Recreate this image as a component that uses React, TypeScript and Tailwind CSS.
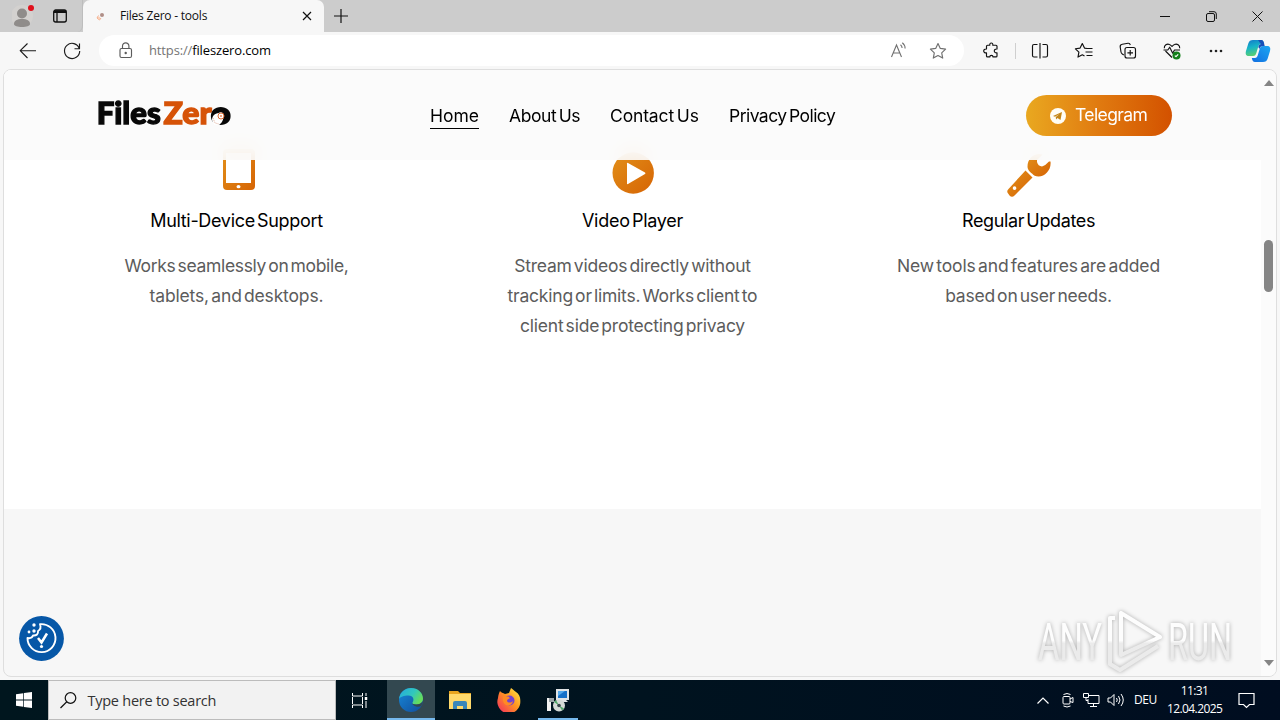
import type { ReactNode } from 'react'

interface IconProps {
  children: ReactNode
  className?: string
}

function LineIcon({ children, className = 'text-[#1b1b1b]' }: IconProps) {
  return (
    <svg width="20" height="20" viewBox="0 0 20 20" fill="none" stroke="currentColor" strokeWidth="1.15" strokeLinejoin="round" className={`shrink-0 ${className}`}>
      {children}
    </svg>
  )
}

function TabBar() {
  return (
    <div className="flex h-8 bg-[#cccccc]">
      <div className="flex w-[83px] items-center rounded-br-[6px] border-r border-[#bdbdbd] pl-3">
        <svg width="24" height="24" viewBox="0 0 24 24" className="shrink-0">
          <circle cx="10" cy="12" r="11" fill="#d3d1cf" />
          <circle cx="10" cy="9.5" r="5" fill="#8f8c8a" />
          <path d="M2 20c0-3.400 3-5 8-5s8 1.600 8 5c0 2-3.500 3-8 3s-8-1-8-3z" fill="#8f8c8a" />
          <circle cx="19" cy="4" r="3" fill="#e0101c" />
        </svg>
        <svg width="16" height="16" viewBox="0 0 16 16" className="ml-4 shrink-0" fill="none" stroke="#111" strokeWidth="1.300">
          <rect x="1.700" y="2" width="12.600" height="12" rx="2" />
          <path d="M1.700 4.300h12.600M5 4.300V14" />
          <path d="M2 3.200h12" strokeWidth="2" />
        </svg>
      </div>
      <div className="flex w-[241px] items-center rounded-t-[7px] bg-[#f7f7f7] pl-3">
        <svg width="12" height="12" viewBox="0 0 12 12" className="shrink-0">
          <circle cx="7" cy="5" r="2" fill="#b08f88" />
          <path d="M3.500 5.500 2 8l2.500 2 1.500-2" fill="none" stroke="#f4ac8a" />
          <circle cx="4" cy="8" r="1.200" fill="#fbd0b8" />
        </svg>
        <span className="ml-[13px] w-[182px] text-[12px] tracking-[-0.22px] text-[#111]">Files Zero - tools</span>
        <svg width="10" height="10" viewBox="0 0 10 10" stroke="#111" strokeWidth="1.200">
          <path d="M1 1l8 8M9 1 1 9" />
        </svg>
      </div>
      <div className="flex w-[33px] items-center justify-center">
        <svg width="14" height="14" viewBox="0 0 14 14" stroke="#111" strokeWidth="1.200">
          <path d="M0 7h14M7 0v14" />
        </svg>
      </div>
      <div className="ml-auto flex items-center">
        <svg width="11" height="11" viewBox="0 0 11 11" stroke="#111" className="mr-[35px]">
          <path d="M0 5.500h10" />
        </svg>
        <svg width="11" height="11" viewBox="0 0 11 11" fill="none" stroke="#111" className="mr-[35px]">
          <rect x=".5" y="2.500" width="8" height="8" rx="1.500" />
          <path d="M3 .7h5a2.300 2.300 0 0 1 2.300 2.300v5" />
        </svg>
        <svg width="11" height="11" viewBox="0 0 11 11" stroke="#111" className="mr-[17px]">
          <path d="M.5.5l10 10M10.500.5l-10 10" />
        </svg>
      </div>
    </div>
  )
}

function Toolbar() {
  return (
    <div className="flex h-[37px] items-center bg-[#f7f7f7]">
      <LineIcon className="ml-[18px] text-[#1b1b1b]">
        <path d="M18 9.700H2.500M9.500 2.500l-7.300 7.200 7.300 7.300" />
      </LineIcon>
      <LineIcon className="ml-6 text-[#1b1b1b]">
        <path d="M17.300 7.500A7.600 7.600 0 1 0 17.700 10M17.500 2.500v5.200h-5" />
      </LineIcon>
      <div className="ml-[17px] flex h-[31px] w-[865px] items-center rounded-full bg-white pl-[17px]">
        <LineIcon className="text-[#5c5c5c]">
          <rect x="4" y="7.500" width="11.500" height="9" rx="1.500" />
          <path d="M6.500 7.500V5a3.200 3.200 0 0 1 6.400 0v2.500" />
          <circle cx="9.700" cy="12" r=".6" fill="currentColor" />
        </LineIcon>
        <span className="ml-[13px] mt-px text-[13px] tracking-[-0.14px] text-[#757575]">
          https://<span className="text-black">fileszero.com</span>
        </span>
        <div className="ml-auto mr-4 flex gap-5">
          <svg width="20" height="20" viewBox="0 0 20 20" fill="none" stroke="#707070" strokeWidth="1.100">
            <path d="M3.500 16 8.500 4l5 12M5.200 12h6.500M12.500 3.800c1 .8 1.600 2 1.600 3.300M14.300 1.800c1.700 1.300 2.800 3.200 2.800 5.700" />
          </svg>
          <LineIcon className="text-[#707070]">
            <path d="m10 2.500 2.300 4.900 5.300.7-3.900 3.700 1 5.300-4.700-2.600-4.700 2.600 1-5.300L2.400 8.100l5.300-.7z" />
          </LineIcon>
        </div>
      </div>
      <LineIcon className="ml-[17px] text-[#111]">
        <path d="M6.500 4.200h2.300C8.600 2.600 9.300 2 10.300 2s1.700.6 1.500 2.200H15a1 1 0 0 1 1 1V8c-1.800-.2-2.700.7-2.700 1.900s.9 2.200 2.700 2v3a1 1 0 0 1-1 1h-3c0-1-.6-1.500-1.600-1.500s-1.600.5-1.600 1.500H6.500a1 1 0 0 1-1-1v-3c-1.800.2-2.800-.8-2.800-2s1-2.100 2.800-1.900V5.200a1 1 0 0 1 1-1z" />
      </LineIcon>
      <div className="ml-[14px] h-4 w-px bg-[#cfcfcf]" />
      <LineIcon className="ml-[14px] text-[#111]">
        <path d="M7.500 3.500H4a1.500 1.500 0 0 0-1.500 1.500v9.500A1.500 1.500 0 0 0 4 16h3.500M12.500 3.500H16A1.500 1.500 0 0 1 17.500 5v9.500A1.500 1.500 0 0 1 16 16h-3.500M10 2v15.500" />
      </LineIcon>
      <LineIcon className="ml-6 text-[#111]">
        <path d="M12 7.400 10 7.100 7.800 2.600 5.600 7.100l-4.700.7 3.500 3.300-.9 5 4.300-2.300 2.200 1.200M12 7.500h6M11 11h7M12 14.500h6" transform="translate(.5)" />
      </LineIcon>
      <LineIcon className="ml-6 text-[#111]">
        <rect x="7" y="6.500" width="10.500" height="10.500" rx="2" />
        <path d="M5.800 14 4.300 13A3 3 0 0 1 3 11L2.200 6A2.500 2.500 0 0 1 4.300 3.200L10 2.300c1.200-.2 2 .5 2.300 1.700M12.200 9v5.600M9.400 11.800H15" />
      </LineIcon>
      <LineIcon className="ml-6 text-[#111]">
        <path d="M10 16.500 3.500 10M2.300 7.200C2 4.200 5 2.300 7.500 3.500c1.200.5 2 1.300 2.500 2 .5-.7 1.300-1.500 2.500-2 2.500-1.200 5.500.7 5.200 3.700M1.500 9h4.300l1.900-2.800 3 6 1.800-3.200h5.500" />
        <circle cx="14.500" cy="14.500" r="4" fill="#13801a" stroke="none" />
        <path d="m12.800 14.600 1.200 1.100 2.200-2.400" stroke="white" />
      </LineIcon>
      <svg width="14" height="4" viewBox="0 0 14 4" className="ml-[27px] shrink-0 fill-[#222]">
        <circle cx="2" cy="2" r="1.300" />
        <circle cx="7" cy="2" r="1.300" />
        <circle cx="12" cy="2" r="1.300" />
      </svg>
      <svg width="26" height="24" viewBox="0 0 26 24" className="ml-[22px] shrink-0">
        <defs>
          <linearGradient id="copilotA" x1="0" y1="0" x2=".3" y2="1">
            <stop offset="0" stopColor="#1277c9" />
            <stop offset=".5" stopColor="#16b4c8" />
            <stop offset="1" stopColor="#58cf73" />
          </linearGradient>
          <linearGradient id="copilotB" x1="0" y1="1" x2="1" y2="0">
            <stop offset="0" stopColor="#126ee0" />
            <stop offset="1" stopColor="#1ca7f2" />
          </linearGradient>
        </defs>
        <path d="M8 1h8c2 0 2.600 1.400 3.200 4h-3c-2 0-2.600 1.500-3.200 3.500l-1.500 5C10.800 16 10 17 8 17H4c-3 0-3.800-2-3-5l2.300-7.500C4 2 5.500 1 8 1z" fill="url(#copilotA)" />
        <path d="M18 23h-8c-2 0-2.600-1.400-3.200-4h3c2 0 2.600-1.500 3.200-3.500l1.500-5C15.200 8 16 7 18 7h4c3 0 3.800 2 3 5l-2.300 7.500c-.7 2.500-2.200 3.500-4.700 3.500z" fill="url(#copilotB)" />
        <path d="M13 1h3c2 0 2.600 1.400 3.200 4l.5 2H18c-2 0-3 1-3.600 3L13.300 8c.5-2 1.300-3 2.900-3-1.200-1-1.800-2-3.200-4z" fill="#174fb8" />
      </svg>
    </div>
  )
}

const navItems = [
  { label: 'Home', style: 'w-[49px] border-b border-black tracking-[0px]' },
  { label: 'About Us', style: 'w-[71px] tracking-[-0.42px]' },
  { label: 'Contact Us', style: 'w-[89px] tracking-[-0.14px]' },
  { label: 'Privacy Policy', style: 'w-[106px] tracking-[-0.54px]' },
]

function SiteHeader() {
  return (
    <header className="absolute inset-x-0 top-0 flex h-[90px] bg-[#fafafa]/88 backdrop-blur-[10px]">
      <svg width="142" height="44" viewBox="-3 -6 142 44" className="ml-[90px] mt-[21px] shrink-0" fontFamily="Lato, sans-serif" fontWeight="900" fontSize="29.500">
        <text x="-.3" y="27" textLength="64" lengthAdjust="spacingAndGlyphs" fill="#080808" stroke="#080808" strokeWidth="1.300">Files</text>
        <text x="66.500" y="27" textLength="48" lengthAdjust="spacingAndGlyphs" fill="#d65308" stroke="#d65308" strokeWidth="1.300">Zer</text>
        <text x="114" y="27" textLength="19.500" lengthAdjust="spacingAndGlyphs" fill="#080808" stroke="#080808" strokeWidth="2">o</text>
        <path d="M115 23c0-5 5-8 9-6 4 3 2 8-2 11h-5z" fill="#fff" />
        <circle cx="124" cy="19" r="3" fill="#fff" stroke="#dc6d35" />
        <circle cx="124" cy="19" r="1" fill="#e4895c" />
        <path d="m116 21 2 5 4 1" fill="none" stroke="#dfb29f" strokeDasharray="1 1" />
      </svg>
      <nav className="ml-[194px] mt-[34px] flex h-[25px] gap-[30px] text-[17.500px] leading-6 [word-spacing:-2px]">
        {navItems.map((item) => (
          <a key={item.label} className={`h-[25px] whitespace-nowrap text-black ${item.style}`}>{item.label}</a>
        ))}
      </nav>
      <button className="ml-[191px] mt-[25px] flex h-[41px] w-[146px] items-center rounded-full bg-linear-to-r from-[#e9a820] via-[#e07a10] to-[#d35100] pl-6 text-[17.500px] tracking-[-0.6px] text-white">
        <svg width="16" height="16" viewBox="0 0 16 16" className="mr-[9px]">
          <circle cx="8" cy="8" r="8" fill="#fffdf5" />
          <path d="m3 8 9-4-1.500 8-3-2-1.500 1.400-.2-2.400L9.500 6 5 8.700z" fill="#c48618" />
        </svg>
        Telegram
      </button>
    </header>
  )
}

function Gradient({ id }: { id: string }) {
  return (
    <defs>
      <linearGradient id={id} x1="0" y1="0" x2="1" y2="1">
        <stop offset="0" stopColor="#e2901a" />
        <stop offset="1" stopColor="#d66404" />
      </linearGradient>
    </defs>
  )
}

function Features() {
  return (
    <section className="flex h-[439px] bg-white px-[34.500px] pt-[79px] text-center">
      <div className="flex w-[396px] flex-col items-center">
        <svg width="32" height="42" viewBox="0 0 32 42" className="ml-[4px]">
          <Gradient id="tablet" />
          <path fillRule="evenodd" d="M4 0h24a4 4 0 0 1 4 4v33a4 4 0 0 1-4 4H4a4 4 0 0 1-4-4V4a4 4 0 0 1 4-4zM3 4v30h25V4z" fill="url(#tablet)" />
          <ellipse cx="15.500" cy="37.700" rx="2" ry="1.600" fill="#fff" />
        </svg>
        <h3 className="mt-[15px] text-[18px] font-[430] leading-[30px] tracking-[-0.32px] text-black [word-spacing:-2.500px]">Multi-Device Support</h3>
        <p className="mt-[15px] text-[17.500px] leading-[30px] tracking-[-0.32px] text-[#5c5c5c] [word-spacing:-2.500px]">
          <span className="block">Works seamlessly on mobile,</span>
          <span className="block tracking-[-0.15px]">tablets, and desktops.</span>
        </p>
      </div>
      <div className="flex w-[396px] flex-col items-center">
        <svg width="42" height="42" viewBox="0 0 42 42" className="mt-[3px]">
          <Gradient id="play" />
          <circle cx="21.200" cy="21" r="20.700" fill="url(#play)" />
          <path d="M15 11.500v20q0 1 1 .5l17-10q1-.7 0-1.500L16 11q-1-.5-1 .5z" fill="#fff" />
        </svg>
        <h3 className="mt-3 text-[18px] font-[430] leading-[30px] tracking-[-0.27px] text-black [word-spacing:-2.500px]">Video Player</h3>
        <p className="mt-[15px] text-[17.500px] leading-[30px] tracking-[-0.22px] text-[#5c5c5c] [word-spacing:-2.500px]">
          <span className="block">Stream videos directly without</span>
          <span className="block">tracking or limits. Works client to</span>
          <span className="block">client side protecting privacy</span>
        </p>
      </div>
      <div className="flex w-[396px] flex-col items-center">
        <svg width="44" height="44" viewBox="0 0 44 44" className="ml-px mt-[4px]">
          <Gradient id="wrench" />
          <path fillRule="evenodd" d="m18.500 17.500 7 7L7.500 42.500a3.500 3.500 0 0 1-5 0L1.500 41a3.500 3.500 0 0 1 0-5zM7.500 33.300a1.800 1.800 0 1 0 .1 3.600 1.800 1.800 0 0 0-.1-3.600z" fill="url(#wrench)" />
          <path d="M35.500 1.500 30 7v2q1 4 5 4.500 3.500-1 7-5l1.500 0c1 8-5 15-12 15-3 0-5-1-6.500-3-2-1.500-4.500-3.500-4.500-7C20.500 5 28-1 35.500 1.500z" fill="url(#wrench)" />
        </svg>
        <h3 className="mt-[9px] text-[18px] font-[430] leading-[30px] tracking-[-0.36px] text-black [word-spacing:-2.500px]">Regular Updates</h3>
        <p className="mt-[15px] text-[17.500px] leading-[30px] tracking-[-0.12px] text-[#5c5c5c] [word-spacing:-2.500px]">
          <span className="block">New tools and features are added</span>
          <span className="block tracking-[-0.22px]">based on user needs.</span>
        </p>
      </div>
    </section>
  )
}

function ConsentButton() {
  return (
    <button className="absolute bottom-[15px] left-[14px]">
      <svg width="46" height="46" viewBox="0 0 46 46" fill="none">
        <circle cx="23.500" cy="23.500" r="22.400" fill="#0657a7" />
        <path d="M22 9.200A14 14 0 1 1 9.500 23c2.500.5 4.700-.3 5.500-2.500 3.500.3 5.500-1.500 5-4.500 2.500-1.300 3.100-3.800 2-6.800z" stroke="#fff" strokeWidth="1.900" strokeLinejoin="round" />
        <path d="m20 23 3.500 4.500L29 18.500" stroke="#fff" strokeWidth="2.500" />
        <g fill="#fff">
          <circle cx="16" cy="10" r="1.700" />
          <circle cx="16" cy="16" r="1.700" />
          <circle cx="11" cy="17" r="1.400" />
          <circle cx="23.500" cy="31.500" r="1.600" />
        </g>
      </svg>
    </button>
  )
}

function Watermark() {
  return (
    <svg width="214" height="74" viewBox="0 0 214 74" className="absolute bottom-0 right-[27px] drop-shadow-[0_0_2px_rgba(0,0,0,0.3)]" fontFamily="Roboto, sans-serif" fontSize="51">
      <defs>
        <linearGradient id="mark" gradientUnits="userSpaceOnUse" x1="0" y1="0" x2="0" y2="70">
          <stop offset=".55" stopColor="#fdfdfd" />
          <stop offset=".59" stopColor="#ebebeb" />
        </linearGradient>
      </defs>
      <text x="3" y="57.500" textLength="64" lengthAdjust="spacingAndGlyphs" fill="url(#mark)">ANY</text>
      <text x="133" y="57.500" textLength="64" lengthAdjust="spacingAndGlyphs" fill="url(#mark)">RUN</text>
      <g fill="none" stroke="url(#mark)" strokeWidth="4" strokeLinejoin="round">
        <path d="M86 11v42l39-18zM80 16h-5v46l10 6 38-24" />
      </g>
    </svg>
  )
}

function Taskbar() {
  return (
    <div className="flex h-10 bg-linear-to-r from-[#00161e] via-[#00131f] to-[#000d20] text-white">
      <div className="flex w-12 items-center justify-center">
        <svg width="16" height="16" viewBox="0 0 16 16" fill="#fff">
          <path d="M0 2.300 7.300 1.200v6.400H0zM8 1.100 16 0v7.600H8zM0 8.400h7.300v6.400L0 13.700zM8 8.400h8V16l-8-1.100z" />
        </svg>
      </div>
      <div className="flex w-[288px] items-center border border-[#bcbcbc] bg-[#f2f2f2] pl-[11px]">
        <svg width="17" height="17" viewBox="0 0 17 17" fill="none" stroke="#111" strokeWidth="1.200">
          <circle cx="10.500" cy="6" r="5.300" />
          <path d="M6.800 9.800.5 16" />
        </svg>
        <span className="ml-[10.500px] mt-px text-[14.500px] tracking-[-0.25px] text-[#333]">Type here to search</span>
      </div>
      <div className="flex w-[51px] items-center pl-[15px]">
        <svg width="17" height="17" viewBox="0 0 17 17" fill="none" stroke="#fff">
          <path d="M1.500 1v3h10V1M1.500 16v-3h10v3M1.500 5v7M11.500 5v7M15 1v3M15 9v7" />
          <path d="M15 5v3" strokeWidth="2.500" />
        </svg>
      </div>
      <div className="flex w-12 items-center justify-center border-b-2 border-[#76b9ed] bg-[#334850]">
        <svg width="26" height="26" viewBox="0 0 26 26" className="mt-px">
          <defs>
            <linearGradient id="edgeTop" x1="0" y1="0" x2="1" y2=".5">
              <stop offset="0" stopColor="#25a8e0" />
              <stop offset=".6" stopColor="#31c7bd" />
              <stop offset="1" stopColor="#66dc5c" />
            </linearGradient>
            <linearGradient id="edgeLow" x1="0" y1="0" x2="1" y2="1">
              <stop offset="0" stopColor="#1788d8" />
              <stop offset="1" stopColor="#124d9b" />
            </linearGradient>
          </defs>
          <circle cx="13" cy="13" r="12" fill="url(#edgeLow)" />
          <path d="M1 12C2 5 7 1 13 1c7 0 12 5 12 10.500 0 4-3 6-7 6-3 0-4-1-3.500-2 2-2.500 1-7-4-7C6 8.500 2 10 1 12z" fill="url(#edgeTop)" />
          <path d="M14.500 15.500c-.5 1 .5 2 3.500 2 3 0 5.500-1 7-3.500L23.300 19c-2 1.300-6 1-8-1-1-.8-1.200-1.600-.8-2.500z" fill="#334850" />
        </svg>
      </div>
      <div className="flex w-[50px] items-center justify-center">
        <svg width="22" height="20" viewBox="0 0 22 20">
          <path d="M0 1h9l2 2h11v16H0z" fill="#e8a51f" />
          <path d="M0 4h22v15H0z" fill="#ffd96b" />
          <path d="M4 19v-6q0-2 2-2h10q2 0 2 2v6h-4v-3H8v3z" fill="#3b87b9" />
        </svg>
      </div>
      <div className="flex w-12 items-center justify-center">
        <svg width="24" height="24" viewBox="0 0 24 24">
          <defs>
            <linearGradient id="fox" x1="1" y1="0" x2="0" y2="1">
              <stop offset="0" stopColor="#fff04a" />
              <stop offset=".45" stopColor="#ff9520" />
              <stop offset="1" stopColor="#f32464" />
            </linearGradient>
          </defs>
          <path d="M3 3c1 2 3 1.500 5 3l4-1 2-5c2 1 3 3 5 4 3 2 4.500 5 4.300 9A11.500 11.500 0 1 1 1 10c.3-3 1-5 2-7z" fill="url(#fox)" />
          <circle cx="12.500" cy="12.500" r="5" fill="#7443cf" />
          <path d="M6 8c2 2 5-1 7 2-1 1-3 1-3 3 1 2 4 2 6 0-1 7-12 6-10-5z" fill="#ff8a24" />
        </svg>
      </div>
      <div className="ml-[5px] flex w-10 items-center justify-center border-b-2 border-[#76b9ed]">
        <svg width="24" height="24" viewBox="0 0 24 24" className="mt-px">
          <path d="M10 1h13v11H10zM13 14h9l-2-2h-5z" fill="#e0e3e5" />
          <path d="M12 3h9v7h-9z" fill="#1670c8" />
          <path d="m12 3 7 0-7 5z" fill="#53a9ec" />
          <path d="M1 10h4v13H1z" fill="#f2f2f2" />
          <path d="M3 10h5v4H3z" fill="#9ba3a6" />
          <circle cx="13" cy="17.500" r="6" fill="#d4dad6" />
          <path d="M13 17.500 8 14l2-2zM13 17.500l5 3-2 2z" fill="#54a86c" />
          <circle cx="13" cy="17.500" r="1.800" fill="#39464c" />
        </svg>
      </div>
      <div className="ml-auto flex items-center">
        <svg width="12" height="7" viewBox="0 0 12 7" fill="none" stroke="#fff" strokeWidth="1.200">
          <path d="m.5 6.500 5.500-5.500 5.500 5.500" />
        </svg>
        <svg width="14" height="16" viewBox="0 0 14 16" fill="none" stroke="#fff" className="ml-[12px]">
          <rect x="2" y="4.500" width="7" height="7.500" rx="1" />
          <path d="m9 7 3-1.500v5L9 9.500M2.500 2.500q3.500-2 7 0M2.500 14q3.500 2 7 0" />
        </svg>
        <svg width="17" height="16" viewBox="0 0 17 16" fill="none" stroke="#fff" className="ml-[8px]">
          <path d="M6 3.500h10v8H5V7M7 14.500h7M10.500 11.500v3M.5 1.500h5v4h-5zM3 5.500v3h2" />
        </svg>
        <svg width="18" height="16" viewBox="0 0 18 16" fill="none" stroke="#fff" className="ml-[7px]">
          <path d="M1 6h2.500L7 2.500v11L3.500 10H1zM9.500 6q1.500 2 0 4M11.500 4q3 4 0 8M14 2q4.500 6 0 12" />
        </svg>
        <span className="ml-[9px] w-[23px] text-[12px] tracking-[-0.5px]">DEU</span>
        <div className="ml-[10px] w-[55px] whitespace-nowrap text-center text-[12px] leading-[18px] tracking-[-0.6px]">
          <div>11:31</div>
          <div>12.04.2025</div>
        </div>
        <svg width="17" height="17" viewBox="0 0 17 17" fill="none" stroke="#fff" strokeWidth="1.200" className="ml-4 mr-[25px]">
          <path d="M1 1.500h15v11h-4.500L8.500 15.500l-3-3H1z" />
        </svg>
      </div>
    </div>
  )
}

export default function App() {
  return (
    <div className="flex h-[720px] w-[1280px] flex-col overflow-hidden bg-[#f7f7f7] font-['Open_Sans',sans-serif]">
      <TabBar />
      <Toolbar />
      <div className="relative mx-[3px] mb-[3px] flex h-[608px] overflow-hidden rounded-[8px] border border-[#dedede] bg-[#f7f7f7]">
        <main className="relative w-[1257px] overflow-hidden font-[Inter,sans-serif]">
          <Features />
          <SiteHeader />
          <ConsentButton />
        </main>
        <div className="flex w-[15px] flex-col items-center bg-[#fbfbfb]">
          <svg width="10" height="6" viewBox="0 0 10 6" className="mt-[10px]">
            <path d="M5 0l5 6H0z" fill="#858585" />
          </svg>
          <div className="mt-[154px] h-[52px] w-[9px] rounded-full bg-[#858585]" />
          <svg width="10" height="6" viewBox="0 0 10 6" className="mb-[10px] mt-auto">
            <path d="M0 0h10L5 6z" fill="#858585" />
          </svg>
        </div>
        <Watermark />
      </div>
      <Taskbar />
    </div>
  )
}
